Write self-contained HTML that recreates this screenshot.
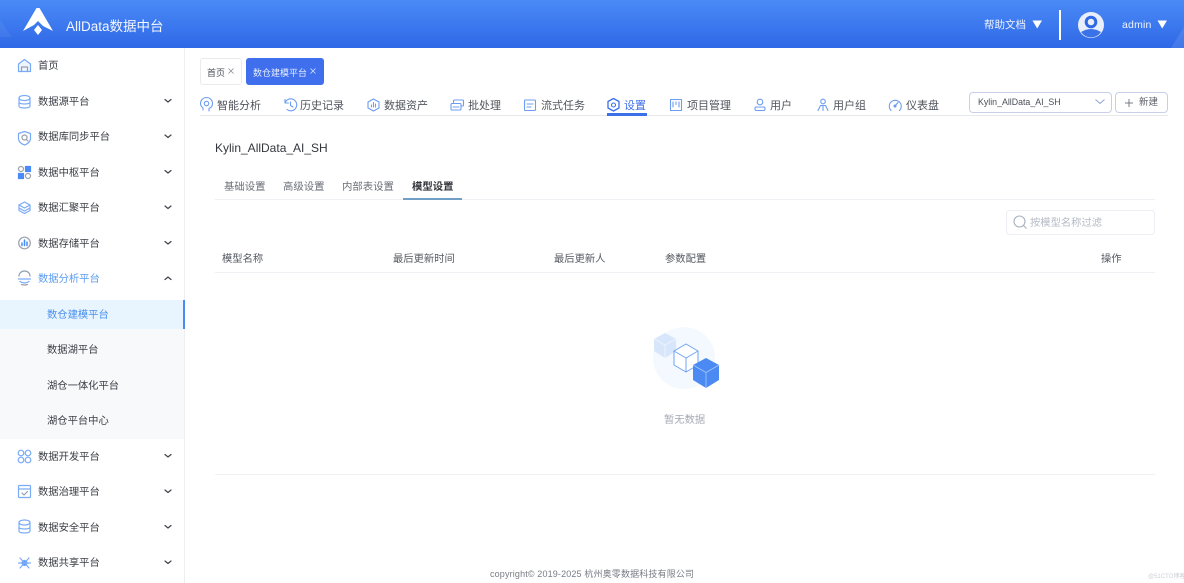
<!DOCTYPE html>
<html lang="zh"><head><meta charset="utf-8"><title>AllData</title>
<style>
*{box-sizing:border-box}
html,body{margin:0;padding:0;width:1184px;height:583px;overflow:hidden;background:#fff;font-family:"Liberation Sans","Noto Sans CJK SC",sans-serif;color:#4a4f57}
.a{position:absolute;white-space:nowrap;line-height:1}
svg{position:absolute;overflow:visible}
#hd{position:absolute;left:0;top:0;width:1184px;height:48px;background:linear-gradient(180deg,#4a8af7,#2f68e6);overflow:hidden}
#side{position:absolute;left:0;top:48px;width:185px;height:535px;background:#fff;border-right:1px solid #eceef2}
.mi{position:absolute;left:38px;margin-top:2px;font-size:10.3px;color:#3a3e45;line-height:1;white-space:nowrap}
.sub{position:absolute;left:47px;margin-top:2px;font-size:10.3px;color:#3a3e45;line-height:1;white-space:nowrap}
.nav{position:absolute;top:100.500px;font-size:11px;color:#50555d;line-height:1;white-space:nowrap}
.t{position:absolute;top:182.500px;font-size:10.400px;color:#6b7078;line-height:1;white-space:nowrap}
.th{position:absolute;top:254.500px;font-size:10.300px;color:#555a62;line-height:1;white-space:nowrap}
</style></head><body>
<div id="hd">
<svg style="left:0;top:0" width="1184" height="48"><path d="M0 20 L12 37 L0 37Z" fill="#fff" opacity=".06"/><path d="M1184 27 L1171 48 L1184 48Z" fill="#fff" opacity=".1"/></svg>
<svg style="left:23px;top:8px" width="30" height="28" viewBox="0 0 30 28"><path d="M13.500 0H16.500L30 23L20 18L15 13L11 17L0 23Z" fill="#fff"/><path d="M15 17L19 22L15 27L11 22Z" fill="#fff"/></svg>
<div class="a" style="left:66px;top:19.500px;font-size:13.500px;color:#f2f6ff">AllData数据中台</div>
<div class="a" style="left:984px;top:19.500px;font-size:10.500px;color:#eef3ff">帮助文档</div>
<svg style="left:1032px;top:20px" width="11" height="9"><path d="M.5 .5H10L5.200 8.500Z" fill="#fff"/></svg>
<div style="position:absolute;left:1059px;top:10px;width:2px;height:30px;background:#fff"></div>
<svg style="left:1078px;top:12px" width="26" height="26" viewBox="0 0 26 26"><circle cx="13" cy="13" r="13" fill="#e8eefb"/><circle cx="13" cy="10" r="4.800" fill="none" stroke="#2f68e6" stroke-width="3"/><path d="M3 20 Q13 14 23 20 Q19 25.500 13 25.500 Q7 25.500 3 20Z" fill="#3a72e8"/></svg>
<div class="a" style="left:1122px;top:20px;font-size:10.500px;letter-spacing:.2px;color:#eef3ff">admin</div>
<svg style="left:1157px;top:20px" width="11" height="9"><path d="M.5 .5H10L5.200 8.500Z" fill="#fff"/></svg>
</div>

<div id="side">
<div style="position:absolute;left:0;top:252px;width:184px;height:139px;background:#f8f9fa"></div>
<div style="position:absolute;left:0;top:252px;width:184px;height:29px;background:#e8f4fe"></div>
</div>
<div style="position:absolute;left:183px;top:300px;width:2px;height:29px;background:#4a8af7"></div>

<div class="mi" style="top:60px">首页</div>
<div class="mi" style="top:96px">数据源平台</div>
<div class="mi" style="top:131px">数据库同步平台</div>
<div class="mi" style="top:167px">数据中枢平台</div>
<div class="mi" style="top:202px">数据汇聚平台</div>
<div class="mi" style="top:238px">数据存储平台</div>
<div class="mi" style="top:273px;color:#5b9bf3">数据分析平台</div>
<div class="sub" style="top:309px;color:#4a90ee">数仓建模平台</div>
<div class="sub" style="top:344px">数据湖平台</div>
<div class="sub" style="top:380px">湖仓一体化平台</div>
<div class="sub" style="top:415px">湖仓平台中心</div>
<div class="mi" style="top:451px">数据开发平台</div>
<div class="mi" style="top:486px">数据治理平台</div>
<div class="mi" style="top:522px">数据安全平台</div>
<div class="mi" style="top:557px">数据共享平台</div>

<svg style="left:0;top:0" width="184" height="583" fill="none" stroke-linecap="round" stroke-linejoin="round">
<g stroke="#3f434a" stroke-width="1.200">
<path d="M165 99.500l3 2.500 3-2.500M165 135l3 2.500 3-2.500M165 170.500l3 2.500 3-2.500M165 206l3 2.500 3-2.500M165 241.500l3 2.500 3-2.500M165 279.500l3-2.500 3 2.500M165 454.500l3 2.500 3-2.500M165 490l3 2.500 3-2.500M165 525.500l3 2.500 3-2.500M165 561l3 2.500 3-2.500"/>
</g>
<g stroke="#7aabf6" stroke-width="1.200">
<path d="M18.500 64 L24.500 59.500 L30.500 64 V71.500 H18.500Z" fill="#eef5ff"/><path d="M21.500 71V67H27.500V71" stroke="#9aa0a8"/>
<ellipse cx="24.500" cy="98" rx="5.500" ry="2.500"/><path d="M19 98V106Q19 108 24.500 108Q30 108 30 106V98M19 102Q19 104 24.500 104Q30 104 30 102"/>
<path d="M24.500 131.500L30.500 133.500V139Q30 143 24.500 145Q19 143 18.500 139V133.500Z"/><circle cx="24.500" cy="137.500" r="2.500" stroke="#9aa0a8"/><path d="M26.500 139.500l1.500 1.500" stroke="#9aa0a8"/>
<circle cx="21" cy="169" r="2.500" stroke="#9aa0a8"/><rect x="25.500" y="166.500" width="5" height="5" fill="#4a8af7" stroke="#4a8af7"/><rect x="18.500" y="173.500" width="5" height="5" fill="#4a8af7" stroke="#4a8af7"/><circle cx="28" cy="176" r="2.500" stroke="#9aa0a8"/>
<path d="M24.500 202L30 205L24.500 208L19 205Z"/><path d="M19 208L24.500 211L30 208M19 205V210.500L24.500 213.500L30 210.500V205"/>
<circle cx="24.500" cy="243" r="5.800" stroke="#9aa0a8"/><path d="M22 245.500V243M24.500 245.500V240M27 245.500V242" stroke="#4a8af7" stroke-width="1.500"/>
<path d="M19 276A5.500 5 0 0 1 30 276" stroke="#8fa0b5"/><path d="M18.500 279H30.500M20 281.500Q24.500 284.500 29 281.500" /><path d="M21.500 284.500Q24.500 285.500 27.500 284.500" stroke="#9aa0a8"/>
<circle cx="21" cy="453" r="2.800"/><circle cx="28" cy="453" r="2.800"/><circle cx="21" cy="460" r="2.800"/><circle cx="28" cy="460" r="2.800"/>
<rect x="18.500" y="485.500" width="12" height="12" rx="1"/><path d="M18.500 489H30.500"/><path d="M22 493l2 2 3.500-3.500" stroke="#8fa0b5"/>
<ellipse cx="24.500" cy="522.500" rx="5.500" ry="2.500"/><path d="M19 522.500V531Q19 533 24.500 533Q30 533 30 531V522.500M19 527Q19 529 24.500 529Q30 529 30 527"/>
<circle cx="24.500" cy="563" r="2.500" fill="#4a8af7"/><path d="M24.500 563L20 558M24.500 563L29 558M24.500 563L20 568M24.500 563L29 568M24.500 563H18.500M24.500 563H30.500"/>
</g>
</svg>

<div style="position:absolute;left:200px;top:58px;width:42px;height:27px;border:1px solid #e8eaee;border-radius:3px;background:#fff"></div>
<div class="a" style="left:207px;top:69px;font-size:9px;color:#4a4f57">首页</div>
<div style="position:absolute;left:246px;top:58px;width:78px;height:27px;border-radius:3px;background:#3f6fec"></div>
<div class="a" style="left:253px;top:69px;font-size:9px;color:#e6edff">数仓建模平台</div>
<svg style="left:0;top:0" width="400" height="90" fill="none" stroke-width=".8"><path d="M228.500 68.500l5 5M233.500 68.500l-5 5" stroke="#888d95"/><path d="M310.500 68.500l5 5M315.500 68.500l-5 5" stroke="#d6e2ff"/></svg>

<div class="nav" style="left:217px">智能分析</div>
<div class="nav" style="left:300px">历史记录</div>
<div class="nav" style="left:384px">数据资产</div>
<div class="nav" style="left:468px">批处理</div>
<div class="nav" style="left:541px">流式任务</div>
<div class="nav" style="left:624px;color:#3d6fe8">设置</div>
<div class="nav" style="left:687px">项目管理</div>
<div class="nav" style="left:770px">用户</div>
<div class="nav" style="left:833px">用户组</div>
<div class="nav" style="left:906px">仪表盘</div>
<div style="position:absolute;left:200px;top:115px;width:968px;height:1px;background:#e6e8ec"></div>
<div style="position:absolute;left:607px;top:113px;width:40px;height:3px;background:#3d6fe8"></div>

<svg style="left:0;top:0" width="1184" height="130" fill="none" stroke="#6d9df0" stroke-width="1.100" stroke-linecap="round" stroke-linejoin="round">
<path d="M203 110V108Q200.500 106 200.500 103.500A6 6 0 0 1 212.500 103.500Q212.500 107 209 108.500V111" /><circle cx="206.500" cy="103.500" r="2.200"/>
<path d="M285 103A6 6 0 1 1 287 109.500M285 99.500V103H288.500M290.500 102V105.500L293 107"/>
<path d="M373.500 99L379 102V108L373.500 111L368 108V102Z"/><path d="M371.500 107V105M373.500 107V102.500M375.500 107V104"/>
<rect x="453.500" y="100" width="10" height="6" rx="1"/><rect x="451" y="103.500" width="10" height="6.500" rx="1" fill="#fff"/><path d="M453 107H459"/>
<rect x="524.500" y="100" width="11" height="10.500" rx="1"/><path d="M527 104H533M527 107H531"/>
<circle cx="613.500" cy="105" r="2" stroke="#3d6fe8"/><path d="M613.500 98.500L619 101.500V108L613.500 111L608 108V101.500Z" stroke="#3d6fe8" stroke-width="1.300"/>
<rect x="670.500" y="99.500" width="11" height="11"/><path d="M673 102V107M676 102V104.500M679 102V107"/>
<circle cx="760" cy="102" r="2.800"/><rect x="755" y="107" width="10" height="3.500" rx="1.500"/>
<circle cx="823" cy="101.500" r="2.300"/><path d="M818 110.500L820.500 105.500H825.500L828 110.500M823 105.500V110.500"/>
<path d="M891 110.500A6 6 0 1 1 899.500 110.500"/><path d="M895 106L898 102.500"/><circle cx="895" cy="106" r="1" fill="#6d9df0"/>
</svg>

<div style="position:absolute;left:969px;top:92px;width:143px;height:21px;border:1px solid #c7d0e8;border-radius:4px"></div>
<div class="a" style="left:978px;top:98px;font-size:8.800px;color:#4a4f57">Kylin_AllData_AI_SH</div>
<svg style="left:1094px;top:98px" width="12" height="8"><path d="M1.500 1.500L6 5.500L10.500 1.500" fill="none" stroke="#8fa6d8" stroke-width="1"/></svg>
<div style="position:absolute;left:1115px;top:92px;width:53px;height:21px;border:1px solid #c7d0e8;border-radius:4px"></div>
<svg style="left:1124px;top:97.500px" width="10" height="10"><path d="M5 1V9M1 5H9" stroke="#777c84" stroke-width="1"/></svg>
<div class="a" style="left:1139px;top:98px;font-size:9.500px;color:#5d6269">新建</div>

<div class="a" style="left:215px;top:142px;font-size:12px;color:#33373d">Kylin_AllData_AI_SH</div>

<div class="t" style="left:224px">基础设置</div>
<div class="t" style="left:283px">高级设置</div>
<div class="t" style="left:342px">内部表设置</div>
<div class="t" style="left:412px;color:#33373d;font-weight:bold">模型设置</div>
<div style="position:absolute;left:215px;top:199px;width:940px;height:1px;background:#eef0f3"></div>
<div style="position:absolute;left:403px;top:198px;width:59px;height:2px;background:#6f9fc4"></div>

<div style="position:absolute;left:1006px;top:210px;width:149px;height:25px;border:1px solid #eceef4;border-radius:4px"></div>
<svg style="left:1013px;top:215px" width="15" height="15" fill="none" stroke="#a8b0bf" stroke-width="1.100"><circle cx="6.500" cy="6.500" r="5.500"/><path d="M10.500 10.500L13.500 13.500"/></svg>
<div class="a" style="left:1030px;top:219px;font-size:10.300px;color:#b6bbc6">按模型名称过滤</div>

<div class="th" style="left:222px">模型名称</div>
<div class="th" style="left:393px">最后更新时间</div>
<div class="th" style="left:554px">最后更新人</div>
<div class="th" style="left:665px">参数配置</div>
<div class="th" style="left:1101px">操作</div>
<div style="position:absolute;left:215px;top:272px;width:940px;height:1px;background:#f0f1f5"></div>

<svg style="left:650px;top:325px" width="72" height="66" viewBox="0 0 72 66" stroke-linejoin="round">
<circle cx="34" cy="33" r="31" fill="#f4f8ff"/>
<path d="M15 8L26 14V26L15 33L4 26V14Z" fill="#d8e6fb"/><path d="M4 14L15 20L26 14M15 20V33" fill="none" stroke="#eaf1fc" stroke-width="1"/>
<path d="M36 19L48 26V40L36 47L24 40V26Z" fill="#fff" stroke="#6ea3f5" stroke-width="1"/><path d="M24 26L36 33L48 26M36 33V47" fill="none" stroke="#6ea3f5" stroke-width="1"/>
<path d="M56 33L69 40V55L56 63L43 55V40Z" fill="#4a8af2"/><path d="M43 40L56 47.500L69 40M56 47.500V63" fill="none" stroke="#a7c8f8" stroke-width=".8"/>
</svg>
<div class="a" style="left:664px;top:416px;font-size:10.300px;color:#a4a9b3">暂无数据</div>
<div style="position:absolute;left:215px;top:474px;width:940px;height:1px;background:#f0f1f4"></div>

<div class="a" style="left:490px;top:570px;font-size:9px;color:#777c84;letter-spacing:.15px">copyright© 2019-2025 杭州奥零数据科技有限公司</div>
<div class="a" style="left:1148px;top:574px;font-size:6px;color:#ccd0d6">@51CTO博客</div>
</body></html>
